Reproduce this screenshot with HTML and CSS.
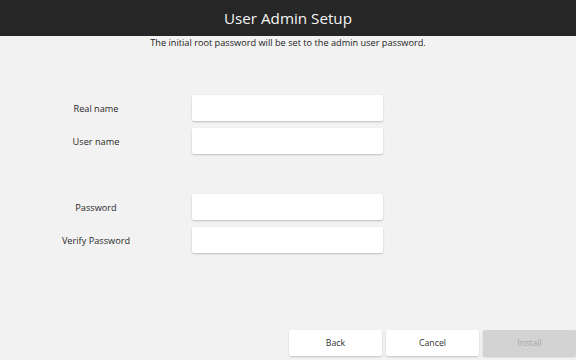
FILE: index.html
```html
<!DOCTYPE html>
<html>
<head>
<meta charset="utf-8">
<link rel="stylesheet" href="styles.css">
</head>
<body>
<div class="app">
  <header class="header">User Admin Setup</header>
  <p class="note">The initial root password will be set to the admin user password.</p>
  <main class="form">
    <div class="group">
      <div class="row"><label class="label">Real name</label><div class="input"></div></div>
      <div class="row"><label class="label">User name</label><div class="input"></div></div>
    </div>
    <div class="group">
      <div class="row"><label class="label">Password</label><div class="input"></div></div>
      <div class="row"><label class="label">Verify Password</label><div class="input"></div></div>
    </div>
  </main>
  <footer class="buttons">
    <div class="btn">Back</div>
    <div class="btn">Cancel</div>
    <div class="btn disabled">Install</div>
  </footer>
</div>
</body>
</html>
```
FILE: styles.css
```css
html, body {
  margin: 0;
  padding: 0;
  background: #f2f2f2;
}
body {
  font-family: "Open Sans", "DejaVu Sans", sans-serif;
  color: #333;
}
.app {
  width: 576px;
  height: 360px;
  display: flex;
  flex-direction: column;
  overflow: hidden;
}
.header {
  height: 36px;
  background: #262626;
  color: #f4f4f4;
  font-size: 15.2px;
  display: flex;
  align-items: center;
  justify-content: center;
  flex-shrink: 0;
}
.note {
  margin: 0;
  height: 14px;
  font-size: 9.2px;
  font-weight: 500;
  text-align: center;
  color: #222;
}
.form {
  display: flex;
  flex-direction: column;
  gap: 40px;
  padding-top: 45px;
  flex: 1;
}
.group {
  display: flex;
  flex-direction: column;
  gap: 7px;
}
.row {
  display: flex;
  align-items: center;
  height: 26px;
}
.label {
  width: 192px;
  text-align: center;
  font-size: 9.2px;
  color: #2a2a2a;
}
.input {
  width: 191px;
  height: 26px;
  background: #fff;
  border-radius: 2px;
  box-shadow: 0 1px 2px rgba(0,0,0,0.22);
}
.buttons {
  display: flex;
  gap: 4px;
  padding-left: 289px;
  padding-bottom: 4px;
}
.btn {
  width: 93px;
  height: 26px;
  flex-shrink: 0;
  background: #fff;
  border-radius: 2px;
  box-shadow: 0 1px 2px rgba(0,0,0,0.2);
  display: flex;
  align-items: center;
  justify-content: center;
  font-size: 8.8px;
  color: #333;
}
.btn.disabled {
  background: #d3d3d3;
  color: #a8a8a8;
}
```
